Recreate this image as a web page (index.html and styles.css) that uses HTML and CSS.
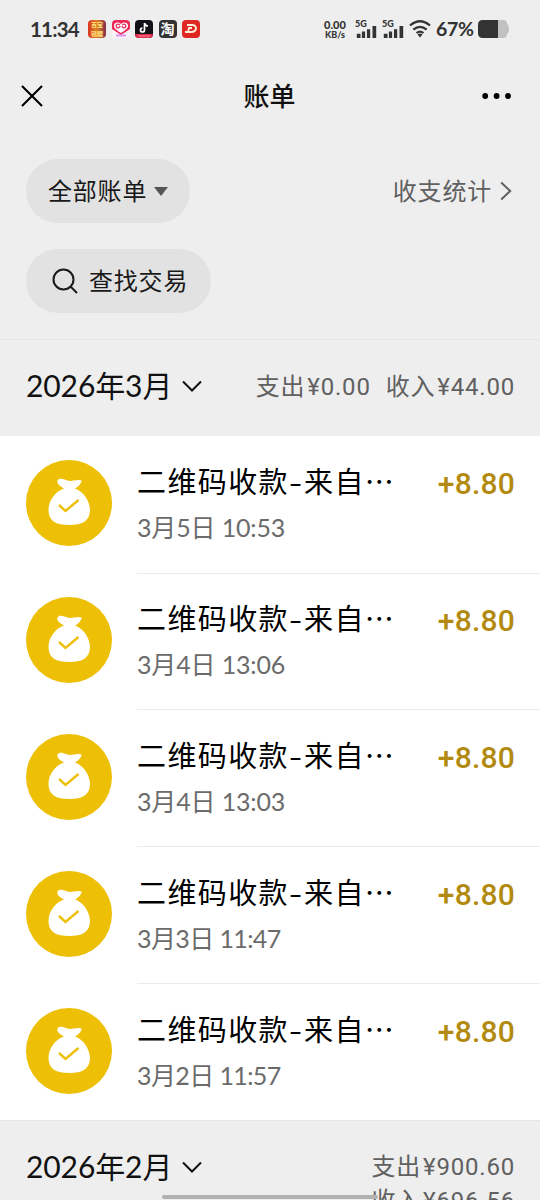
FILE: index.html
```html
<!DOCTYPE html>
<html lang="zh-CN">
<head>
<meta charset="utf-8">
<title>账单</title>
<link rel="stylesheet" href="styles.css">
</head>
<body>
<svg width="0" height="0" class="defs" aria-hidden="true">
  <symbol id="bag" viewBox="0 0 86 86">
    <circle cx="43" cy="43" r="43" fill="#edbf05"/>
    <path fill="#fff" d="M38 28.500C33 26 30.500 23 31.500 20.500C33 17.500 37 18.800 40 20C43 21.200 45 21.200 48 20.500C51 19.800 54 19.700 55.500 20.500C56 22.500 52 27.500 49 28.500C57 31 64 41 64 50C64 61 56 65 43.500 65C30 65 22.500 61 22.500 50C22.500 40 30 31 38 28.500Z"/>
    <path fill="none" stroke="#edbf05" stroke-width="2.400" d="M33 45L39.500 51L52.500 40"/>
  </symbol>
  <symbol id="down" viewBox="0 0 20 12"><path d="M1 1.500L10 10.500L19 1.500" fill="none" stroke="#111" stroke-width="2"/></symbol>
  <symbol id="signal" viewBox="0 0 21 13"><path d="M0 8.500h4V13H0zM5.500 6h3.500v7H5.500zM11 3.500h3.500V13H11zM17 0h4v13h-4z" fill="#333"/></symbol>
</svg>
<div class="screen">
  <div class="home-bar"></div>
  <header class="status">
    <span class="clock">11:34</span>
    <div class="apps">
      <span class="app app-gold"><b>百宝</b><b>锦鲤</b></span>
      <span class="app app-heart"><svg viewBox="0 0 18 18"><path d="M0 0h18v9L9 15L0 9z" fill="#ed2856"/><path d="M9 13C3 9 2 8 2 5.500C2 2 7 1.500 9 4C11 1.500 16 2 16 5.500C16 8 15 9 9 13" fill="#fff"/><path d="M8 5C5 3 3.500 5 4.500 7C6 9 8 7 8 6M10 5c3-2 4.500 0 3.500 2c-1.500 2-3.500 0-3.500-1" stroke="#e93863" stroke-width="1.400" fill="none"/><path d="M4 15.500h10" stroke="#db8fe6" stroke-width="2"/></svg></span>
      <span class="app app-tok"><svg viewBox="0 0 18 18"><path d="M0 14h18v4H0z" fill="#e52b4b"/><path d="M9.500 3v7a2 2 0 1 1-2-2M9.500 3c.5 2 1.500 3 3.500 3" stroke="#fff" stroke-width="1.700" fill="none"/><path d="M3 16h12" stroke="#f28a9b"/></svg></span>
      <span class="app app-tao">淘</span>
      <span class="app app-d"><svg viewBox="0 0 18 18"><path d="M5 5h5c6 0 5 7-1 7H6l1-4h3M3 12h4" fill="none" stroke="#fff0dc" stroke-width="1.800"/></svg></span>
    </div>
    <div class="rate"><span>0.00</span><small>KB/s</small></div>
    <div class="cell"><span>5G</span><svg><use href="#signal"/></svg></div>
    <div class="cell"><span>5G</span><svg><use href="#signal"/></svg></div>
    <svg class="wifi" viewBox="0 0 22 18"><path d="M1 5.500Q11-3 21 5.500M4.300 9.700Q11 4 17.700 9.700M7.500 13Q11 10.300 14.500 13" fill="none" stroke="#333" stroke-width="2.200"/><path d="M8.500 14.500Q11 12.500 13.500 14.500L11 17.500z" fill="#333"/></svg>
    <span class="percent">67%</span>
    <svg class="battery" viewBox="0 0 31 18"><path d="M5 0H25Q29 0 29 4Q31 5 31 9Q31 13 29 14Q29 18 25 18H5Q0 18 0 13V5Q0 0 5 0" fill="#c1c1c1"/><path d="M20 0H5Q0 0 0 5V13Q0 18 5 18H20z" fill="#333"/></svg>
  </header>
  <nav class="nav">
    <svg class="close" viewBox="0 0 22 22"><path d="M1 1L21 21M21 1L1 21" stroke="#000" stroke-width="2.100"/></svg>
    <h1>账单</h1>
    <svg class="more" viewBox="0 0 30 6"><circle cx="3.200" cy="3" r="2.900"/><circle cx="14.600" cy="3" r="2.900"/><circle cx="26" cy="3" r="2.900"/></svg>
  </nav>
  <section class="filters">
    <div class="filter-row">
      <button class="pill all"><span>全部账单</span><i class="caret"></i></button>
      <a class="stats"><span>收支统计</span><svg viewBox="0 0 12 20"><path d="M1.200 1.500L10.200 10L1.200 18.500" fill="none" stroke="#606060" stroke-width="2"/></svg></a>
    </div>
    <button class="pill search"><svg viewBox="0 0 26 26"><circle cx="11.500" cy="11.500" r="10" fill="none" stroke="#191919" stroke-width="2"/><path d="M18.500 18.500L25 25" stroke="#191919" stroke-width="2"/></svg><span>查找交易</span></button>
  </section>
  <section class="month first">
    <h2><span class="date">2026年3月</span><svg><use href="#down"/></svg></h2>
    <div class="totals"><span>支出<em>¥0.00</em></span><span>收入<em>¥44.00</em></span></div>
  </section>
  <main class="list">
    <article class="item"><svg class="bag"><use href="#bag"/></svg><div class="body"><div class="info"><h3>二维码收款<i class="dash">-</i>来自<i class="dots">⋯</i></h3><time>3月5日 10:53</time></div><strong>+8.80</strong></div></article>
    <article class="item"><svg class="bag"><use href="#bag"/></svg><div class="body"><div class="info"><h3>二维码收款<i class="dash">-</i>来自<i class="dots">⋯</i></h3><time>3月4日 13:06</time></div><strong>+8.80</strong></div></article>
    <article class="item"><svg class="bag"><use href="#bag"/></svg><div class="body"><div class="info"><h3>二维码收款<i class="dash">-</i>来自<i class="dots">⋯</i></h3><time>3月4日 13:03</time></div><strong>+8.80</strong></div></article>
    <article class="item"><svg class="bag"><use href="#bag"/></svg><div class="body"><div class="info"><h3>二维码收款<i class="dash">-</i>来自<i class="dots">⋯</i></h3><time class="narrow">3月3日 11:47</time></div><strong>+8.80</strong></div></article>
    <article class="item"><svg class="bag"><use href="#bag"/></svg><div class="body"><div class="info"><h3>二维码收款<i class="dash">-</i>来自<i class="dots">⋯</i></h3><time class="narrow">3月2日 11:57</time></div><strong>+8.80</strong></div></article>
  </main>
  <section class="month second">
    <h2><span class="date">2026年2月</span><svg><use href="#down"/></svg></h2>
    <div class="totals stacked"><span>支出<em>¥900.60</em></span><span>收入<em>¥696.56</em></span></div>
  </section>
</div>
</body>
</html>
```
FILE: styles.css
```css
* { box-sizing: border-box; }
body { margin: 0; background: #eee; }
h1, h2, h3 { margin: 0; font-weight: 400; }
i, em { font-style: normal; }
svg { display: block; flex: none; }
.defs { position: absolute; }
.screen { position: relative; width: 540px; height: 1200px; overflow: hidden; background: #eee; color: #111; font-family: "Noto Sans CJK SC", sans-serif; }

.status { display: flex; align-items: center; height: 58px; padding-left: 30px; color: #333; font-family: Lato, sans-serif; white-space: nowrap; }
.clock { width: 58px; font-size: 20.500px; font-weight: 700; letter-spacing: -.8px; }
.apps { display: flex; gap: 5.500px; width: 235px; }
.app { display: flex; width: 18px; height: 18px; border-radius: 4px; overflow: hidden; align-items: center; justify-content: center; font-family: "Noto Sans CJK SC", sans-serif; }
.app svg { width: 18px; height: 18px; }
.app-gold { flex-direction: column; background: linear-gradient(90deg, #d93620, #dd811f 50%, #842e4d); color: #ffe17d; }
.app-gold b { font-size: 6px; line-height: 9px; }
.app-heart { background: #fff3fb; }
.app-tok { background: #111217; }
.app-tao { background: #333; color: #fff; font-size: 14px; font-weight: 700; line-height: 16px; padding-bottom: 2px; }
.app-d { background: #df2821; }
.rate { display: flex; flex-direction: column; align-items: center; width: 24px; margin-right: 8px; font-size: 11px; font-weight: 900; line-height: 11px; }
.rate small { font-size: 9px; line-height: 10px; font-weight: 900; }
.cell { width: 27px; height: 18px; }
.cell span { display: block; height: 6px; font-size: 9px; line-height: 7px; font-weight: 900; }
.cell svg { width: 21px; height: 12px; margin-left: 1px; }
.wifi { width: 22px; height: 18px; }
.percent { width: 42px; margin-left: 5px; padding-bottom: 1px; font-size: 19.500px; font-weight: 700; letter-spacing: -.3px; }
.battery { width: 31px; height: 18px; }

.nav { display: flex; align-items: center; justify-content: space-between; height: 75px; padding: 0 28px 0 21px; }
.close { width: 22px; height: 22px; }
.nav h1 { font-size: 26px; font-weight: 500; line-height: 40px; margin-left: 14px; padding-bottom: 1px; }
.more { width: 30px; height: 6px; }

.filters { height: 206px; padding: 26px 28px 0 26px; }
.filter-row { display: flex; align-items: center; justify-content: space-between; margin-bottom: 26px; }
.pill { display: flex; align-items: center; height: 64px; border: 0; border-radius: 32px; background: #e2e2e2; color: #191919; font-family: inherit; font-size: 24px; letter-spacing: .8px; padding: 0; white-space: nowrap; }
.pill span, .stats span { padding-bottom: 4px; }
.all { width: 164px; padding-left: 22px; }
.caret { margin-left: 7px; border: 7px solid transparent; border-top: 9px solid #555; border-bottom: 0; }
.search { width: 185px; padding-left: 26px; gap: 11px; }
.search svg { width: 26px; height: 26px; }
.stats { display: flex; align-items: center; gap: 8px; color: #606060; font-size: 24px; letter-spacing: .8px; }
.stats svg { width: 12px; height: 20px; }

.month { display: flex; justify-content: space-between; padding: 0 25px 0 26px; border-top: 1px solid #e5e5e5; white-space: nowrap; }
.first { height: 97px; }
.second { height: 150px; }
.month h2 { display: flex; align-items: center; gap: 10px; height: 92px; font-size: 30px; }
.month h2 svg { width: 20px; height: 12px; }
.date { padding-bottom: 4px; font-family: Lato, "Noto Sans CJK SC", sans-serif; letter-spacing: -.1px; }
.totals { display: flex; align-items: center; gap: 15px; height: 92px; padding-bottom: 4px; color: #606060; font-size: 24px; letter-spacing: .8px; }
.totals em { font-family: Roboto, sans-serif; margin-left: 2px; }
.stacked { flex-direction: column; align-items: flex-end; gap: 0; padding: 28px 0 0; height: 104px; line-height: 32px; }

.list { background: #fff; height: 684px; }
.item { display: flex; height: 136.900px; padding: 24px 0 0 25.500px; }
.bag { width: 86px; height: 86px; margin-right: 25.500px; }
.body { display: flex; flex: 1; justify-content: space-between; height: 113.500px; border-bottom: 1.500px solid #ebebeb; padding-right: 25px; }
.item:last-child .body { border: 0; }
.info { white-space: nowrap; }
h3 { display: flex; font-size: 29px; line-height: 40px; letter-spacing: 1.400px; color: #000; }
.dash { width: 15px; text-align: center; transform: scaleX(1.3); }
time { display: block; font-family: Lato, "Noto Sans CJK SC", sans-serif; font-size: 25px; line-height: 36px; margin-top: 9px; letter-spacing: -.15px; color: #6b6b6b; }
.narrow { letter-spacing: -.6px; }
.item strong { font-family: Roboto, sans-serif; font-size: 30px; font-weight: 500; line-height: 47px; letter-spacing: .2px; color: #b28a10; }
.home-bar { position: absolute; left: 162px; top: 1195px; width: 216px; height: 4px; border-radius: 2px; background: #b2b2b2; }
```
